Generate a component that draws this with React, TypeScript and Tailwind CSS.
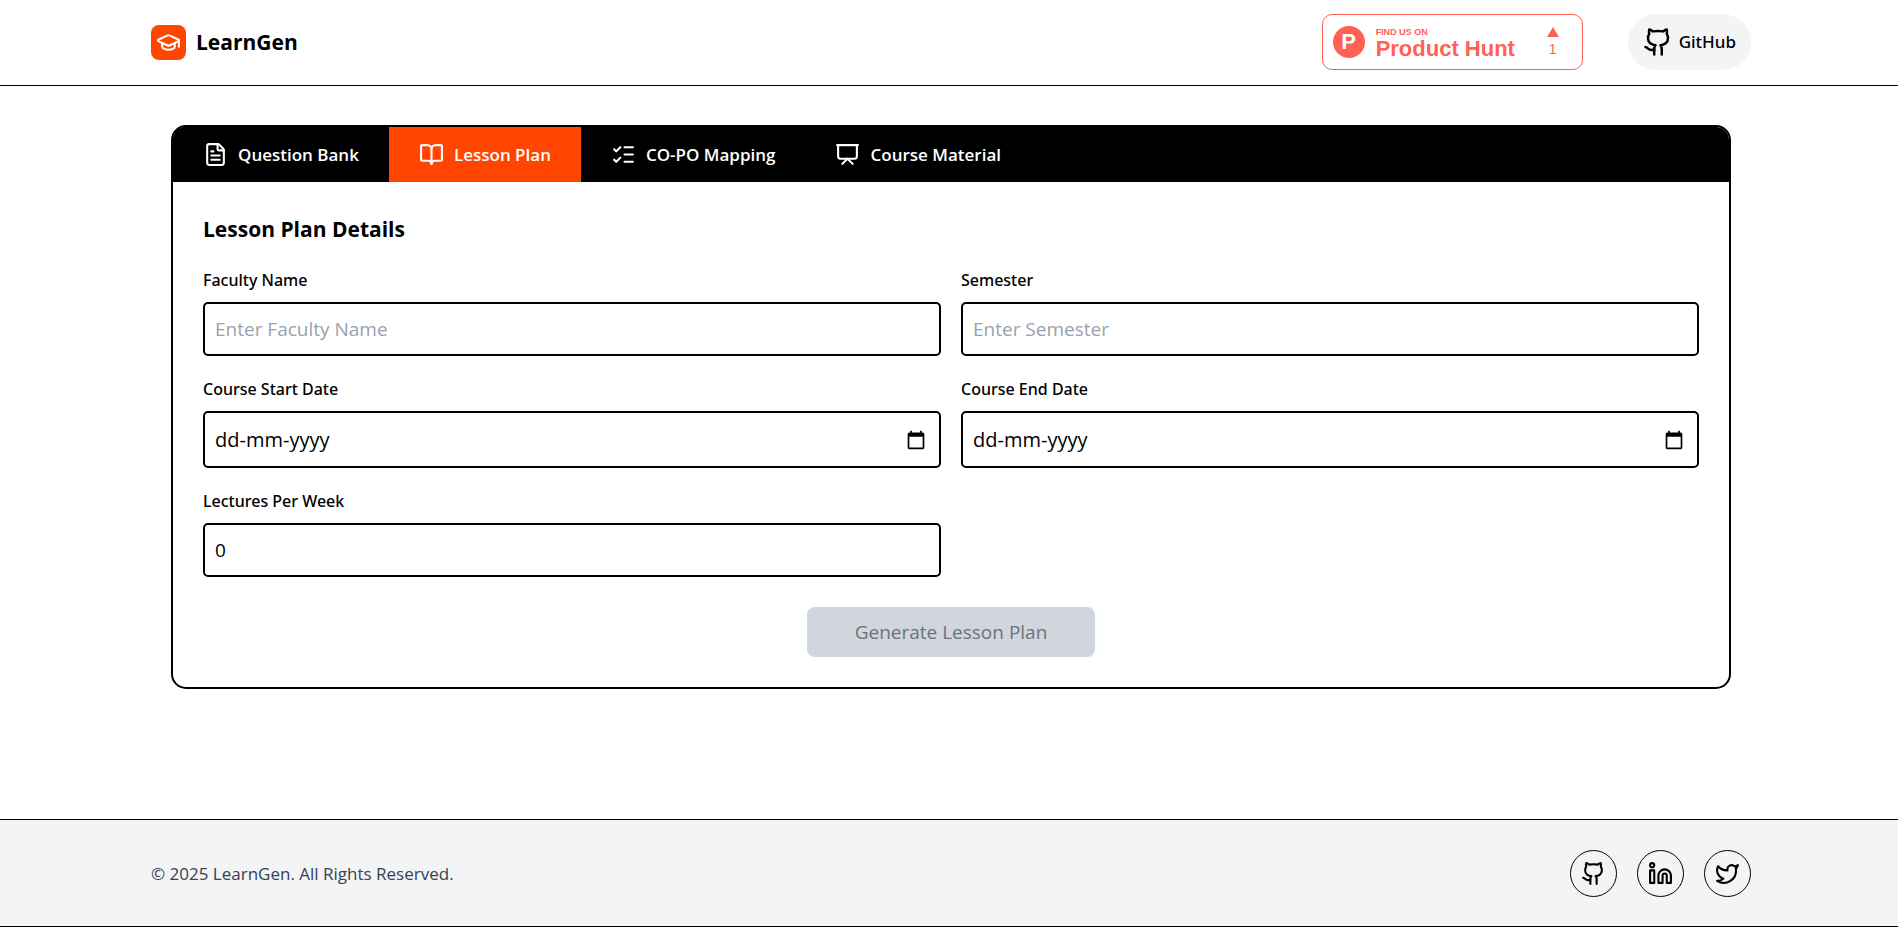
import { useState } from "react";
import {
  BookOpen,
  FileText,
  Github,
  GraduationCap,
  Linkedin,
  ListChecks,
  Presentation,
  Twitter,
} from "lucide-react";

const tabs = [
  { name: "Question Bank", icon: FileText },
  { name: "Lesson Plan", icon: BookOpen },
  { name: "CO-PO Mapping", icon: ListChecks },
  { name: "Course Material", icon: Presentation },
];

const socials = [
  { name: "GitHub", icon: Github },
  { name: "LinkedIn", icon: Linkedin },
  { name: "Twitter", icon: Twitter },
];

const labelClass = "block mb-2 font-['Noto_Sans',sans-serif] text-[16px] leading-[27px] font-medium";
const inputClass =
  "block w-full rounded-[5px] border-2 border-black bg-white px-[10px] leading-[30px] focus:outline-none focus:border-[#ff4500]";

const ProductHuntBadge = () => {
  return <a href="#product-hunt" className="flex h-14 w-[261px] items-center rounded-[10px] border border-[#ff6154] bg-white pl-[10px] pr-[23px] font-['Liberation_Sans',sans-serif] font-bold text-[#ff6154]">
      <span className="flex h-8 w-8 items-center justify-center rounded-full bg-[#ff6154] text-[22px] leading-none text-white">P</span>
      <span className="ml-[11px] flex flex-1 flex-col pt-1">
        <span className="text-[9px] leading-[10px]">FIND US ON</span>
        <span className="text-[22px] leading-6">Product Hunt</span>
      </span>
      <span className="flex flex-col items-center">
        <svg width="12" height="10" viewBox="0 0 12 10" aria-hidden="true">
          <path d="M6 0L12 10H0Z" fill="currentColor" />
        </svg>
        <span className="mt-1 text-sm leading-4 font-normal">1</span>
      </span>
    </a>;
};

const Header = () => {
  return <header className="border-b border-black bg-white pl-1">
      <div className="mx-auto flex max-w-[1600px] items-center justify-between pt-[14px] pb-[15px]">
        <a href="#home" className="flex items-center gap-[10px]">
          <span className="rounded-lg bg-[#ff4500] p-[5px] text-white">
            <GraduationCap size={25} />
          </span>
          <span className="text-[21px] leading-[35px] font-bold">LearnGen</span>
        </a>
        <div className="flex items-center gap-[45px]">
          <ProductHuntBadge />
          <a href="#github" className="flex h-14 items-center gap-[6px] rounded-full bg-gray-100 px-[15px] font-['Noto_Sans',sans-serif] text-[17px] font-medium">
            <Github size={30} />
            GitHub
          </a>
        </div>
      </div>
    </header>;
};

const DateField = ({ id, label }: { id: string; label: string }) => {
  return <div>
      <label htmlFor={id} className={labelClass}>{label}</label>
      <div className="relative">
        <input id={id} type="text" placeholder="dd-mm-yyyy" className={`${inputClass} h-[57px] text-[20px] placeholder:text-black`} />
        <button type="button" aria-label={`Pick ${label}`} className="absolute inset-y-0 right-[15px] flex items-center">
          <svg width="20" height="20" viewBox="0 0 24 24" aria-hidden="true">
            <path d="M20 3h-1V1h-2v2H7V1H5v2H4c-1.100 0-2 .9-2 2v16c0 1.100.9 2 2 2h16c1.100 0 2-.9 2-2V5c0-1.100-.9-2-2-2zm0 18H4V8h16v13z" fill="currentColor" />
          </svg>
        </button>
      </div>
    </div>;
};

const LessonPlanForm = () => {
  const [lectures, setLectures] = useState("0");

  return <form className="p-[30px]">
      <h2 className="mb-5 text-[21px] leading-[35px] font-bold">Lesson Plan Details</h2>
      <div className="grid grid-cols-1 gap-5 md:grid-cols-2">
        <div>
          <label htmlFor="faculty" className={labelClass}>Faculty Name</label>
          <input id="faculty" type="text" placeholder="Enter Faculty Name" className={`${inputClass} h-[54px] text-[19px] placeholder:text-gray-400`} />
        </div>
        <div>
          <label htmlFor="semester" className={labelClass}>Semester</label>
          <input id="semester" type="text" placeholder="Enter Semester" className={`${inputClass} h-[54px] text-[19px] placeholder:text-gray-400`} />
        </div>
        <DateField id="start-date" label="Course Start Date" />
        <DateField id="end-date" label="Course End Date" />
        <div>
          <label htmlFor="lectures" className={labelClass}>Lectures Per Week</label>
          <input id="lectures" type="number" value={lectures} onChange={(e) => setLectures(e.target.value)} className={`${inputClass} h-[54px] text-[19px]`} />
        </div>
      </div>
      <div className="mt-[30px] flex justify-center">
        <button type="submit" disabled className="rounded-lg bg-gray-300 px-12 py-[10px] text-[19px] leading-[30px] text-gray-500">
          Generate Lesson Plan
        </button>
      </div>
    </form>;
};

const Footer = () => {
  return <footer className="border-y border-black bg-gray-100 pl-1">
      <div className="mx-auto flex max-w-[1600px] items-center justify-between pt-[30px] pb-[29px]">
        <p className="text-[17px] leading-[25px] text-gray-700">© 2025 LearnGen. All Rights Reserved.</p>
        <div className="flex gap-5">
          {socials.map(({ name, icon: Icon }) => (
            <a key={name} href={`#${name}`} aria-label={name} className="flex h-[47px] w-[47px] items-center justify-center rounded-full border border-black">
              <Icon size={25} />
            </a>
          ))}
        </div>
      </div>
    </footer>;
};

const App = () => {
  const [active, setActive] = useState("Lesson Plan");

  return <div className="flex min-h-screen flex-col bg-white font-['Open_Sans',sans-serif] text-black">
      <Header />
      <main className="flex-1 pl-1">
        <div className="mx-auto max-w-[1600px] px-5 pt-[39px] pb-10">
          <div className="overflow-hidden rounded-[15px] border-2 border-black bg-white">
            <nav className="flex bg-black">
              {tabs.map(({ name, icon: Icon }) => (
                <button
                  key={name}
                  type="button"
                  onClick={() => setActive(name)}
                  className={`flex items-center gap-[10px] px-[30px] py-[15px] text-[17px] leading-[25px] font-semibold text-white ${active === name ? "bg-[#ff4500]" : "bg-black"}`}
                >
                  <Icon size={25} />
                  {name}
                </button>
              ))}
            </nav>
            <LessonPlanForm />
          </div>
        </div>
      </main>
      <Footer />
    </div>;
};

export default App;
